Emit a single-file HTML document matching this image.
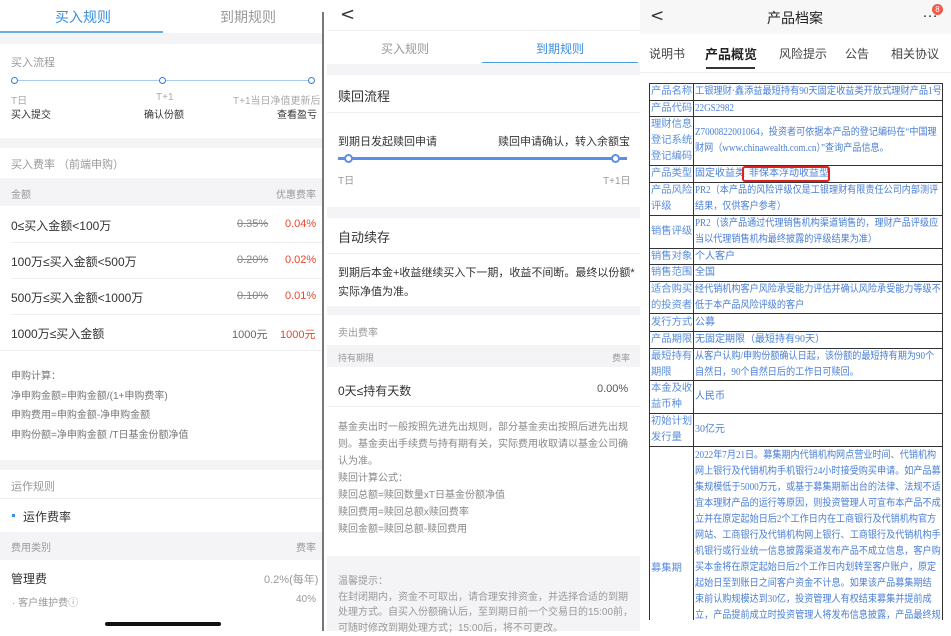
<!DOCTYPE html>
<html><head><meta charset="utf-8"><style>
*{margin:0;padding:0;box-sizing:border-box}
body{width:951px;height:631px;overflow:hidden;background:#fff;font-family:"Liberation Sans","Noto Sans CJK SC",sans-serif;position:relative;color:#333}
.a{position:absolute;white-space:nowrap}
.band{position:absolute;background:#f4f4f6}
.g{color:#999}
.blue{color:#3b8fe0}
.line{position:absolute;height:1px;background:#eee}
.tb{position:absolute;left:649px;top:83px;width:294px;border-top:1px solid #333;border-left:1px solid #333;font-family:"Liberation Serif","Noto Sans CJK SC",serif;font-size:10px;color:#4a7fd6}
.r{display:flex;border-bottom:1px solid #333;overflow:hidden}
.r>div{display:flex;align-items:center;overflow:hidden;white-space:nowrap;line-height:16px;border-right:1px solid #333;flex-shrink:0}
.r>div:first-child{width:44px;color:#5a8ede;padding-left:1px;font-size:10.3px}
.r>div:last-child{width:249px;padding-left:1px}
.r>div:last-child>span{display:block;transform:scaleX(.91);transform-origin:0 50%}
</style></head><body>
<!-- Panel 1 -->
<div class="a blue" style="left:55px;top:7px;font-size:14px">买入规则</div>
<div class="a" style="left:220px;top:7px;font-size:14px;color:#999">到期规则</div>
<div class="a" style="left:0;top:31px;width:163px;height:2px;background:#6aaee8"></div>
<div class="band" style="left:0;top:33px;width:322px;height:11px"></div>
<div class="a g" style="left:11px;top:54px;font-size:11px">买入流程</div>
<div class="a" style="left:14px;top:80px;width:297px;height:1px;background:#a8cdf0"></div>
<div class="a" style="left:11px;top:77px;width:7px;height:7px;border:1.5px solid #3a7ad8;border-radius:50%;background:#fff"></div>
<div class="a" style="left:159px;top:77px;width:7px;height:7px;border:1.5px solid #3a7ad8;border-radius:50%;background:#fff"></div>
<div class="a" style="left:308px;top:77px;width:7px;height:7px;border:1.5px solid #3a7ad8;border-radius:50%;background:#fff"></div>
<div class="a" style="left:11px;top:92px;font-size:10px;color:#aaa">T日</div>
<div class="a" style="left:156px;top:92px;font-size:10px;color:#aaa">T+1</div>
<div class="a" style="left:233px;top:92px;font-size:10px;color:#aaa">T+1当日净值更新后</div>
<div class="a" style="left:11px;top:106px;font-size:10px">买入提交</div>
<div class="a" style="left:144px;top:106px;font-size:10px">确认份额</div>
<div class="a" style="left:277px;top:106px;font-size:10px">查看盈亏</div>
<div class="band" style="left:0;top:138px;width:322px;height:10px"></div>
<div class="a g" style="left:11px;top:156px;font-size:11px">买入费率 （前端申购）</div>
<div class="band" style="left:0;top:178px;width:322px;height:28px"></div>
<div class="a g" style="left:11px;top:186px;font-size:10px">金额</div>
<div class="a g" style="left:276px;top:186px;font-size:10px">优惠费率</div>
<div class="a" style="left:11px;top:217px;font-size:12px">0≤买入金额&lt;100万</div>
<div class="a" style="left:237px;top:218px;font-size:11px;color:#888;text-decoration:line-through">0.35%</div>
<div class="a" style="left:285px;top:218px;font-size:11px;color:#e8472e">0.04%</div>
<div class="line" style="left:11px;top:242px;width:311px"></div>
<div class="a" style="left:11px;top:253px;font-size:12px">100万≤买入金额&lt;500万</div>
<div class="a" style="left:237px;top:254px;font-size:11px;color:#888;text-decoration:line-through">0.20%</div>
<div class="a" style="left:285px;top:254px;font-size:11px;color:#e8472e">0.02%</div>
<div class="line" style="left:11px;top:278px;width:311px"></div>
<div class="a" style="left:11px;top:289px;font-size:12px">500万≤买入金额&lt;1000万</div>
<div class="a" style="left:237px;top:290px;font-size:11px;color:#888;text-decoration:line-through">0.10%</div>
<div class="a" style="left:285px;top:290px;font-size:11px;color:#e8472e">0.01%</div>
<div class="line" style="left:11px;top:314px;width:311px"></div>
<div class="a" style="left:11px;top:325px;font-size:12px">1000万≤买入金额</div>
<div class="a" style="left:232px;top:326px;font-size:11px;color:#666">1000元</div>
<div class="a" style="left:280px;top:326px;font-size:11px;color:#e8472e">1000元</div>
<div class="line" style="left:0;top:350px;width:322px"></div>
<div class="a" style="left:11px;top:367px;font-size:10px;color:#777;line-height:19.7px">申购计算：<br>净申购金额=申购金额/(1+申购费率)<br>申购费用=申购金额-净申购金额<br>申购份额=净申购金额 /T日基金份额净值</div>
<div class="band" style="left:0;top:460px;width:322px;height:10px"></div>
<div class="a g" style="left:11px;top:478px;font-size:11px">运作规则</div>
<div class="line" style="left:0;top:498px;width:322px"></div>
<div class="a" style="left:12px;top:514px;width:3px;height:3px;background:#3b8fe0"></div>
<div class="a" style="left:23px;top:508px;font-size:12px">运作费率</div>
<div class="band" style="left:0;top:532px;width:322px;height:28px"></div>
<div class="a g" style="left:11px;top:539px;font-size:10px">费用类别</div>
<div class="a g" style="left:296px;top:539px;font-size:10px">费率</div>
<div class="a" style="left:11px;top:570px;font-size:12px">管理费</div>
<div class="a g" style="left:264px;top:571px;font-size:11px">0.2%(每年)</div>
<div class="a g" style="left:12px;top:594px;font-size:10px">· 客户维护费ⓘ</div>
<div class="a g" style="left:296px;top:594px;font-size:10px">40%</div>
<div class="a" style="left:105px;top:622px;width:116px;height:4px;border-radius:2px;background:#111"></div>
<div class="a" style="left:322px;top:12px;width:2px;height:619px;background:#777"></div>
<!-- Panel 2 -->
<div class="a" style="left:340px;top:4px;font-size:18px;color:#333;font-family:'DejaVu Sans'">&lt;</div>
<div class="line" style="left:327px;top:30px;width:313px;background:#f0f0f0"></div>
<div class="a" style="left:381px;top:40px;font-size:12px;color:#999">买入规则</div>
<div class="a blue" style="left:536px;top:40px;font-size:12px">到期规则</div>
<div class="a" style="left:482px;top:62px;width:156px;height:1px;background:#4aa0e6"></div>
<div class="band" style="left:327px;top:64px;width:313px;height:11px"></div>
<div class="a" style="left:338px;top:86px;font-size:13px">赎回流程</div>
<div class="line" style="left:327px;top:112px;width:313px"></div>
<div class="a" style="left:338px;top:133px;font-size:11px">到期日发起赎回申请</div>
<div class="a" style="left:498px;top:133px;font-size:11px">赎回申请确认，转入余额宝</div>
<div class="a" style="left:338px;top:157px;width:289px;height:3px;background:#5b8ee8"></div>
<div class="a" style="left:344px;top:154px;width:9px;height:9px;border:2px solid #5b8ee8;border-radius:50%;background:#fff"></div>
<div class="a" style="left:611px;top:154px;width:9px;height:9px;border:2px solid #5b8ee8;border-radius:50%;background:#fff"></div>
<div class="a g" style="left:338px;top:172px;font-size:10px">T日</div>
<div class="a g" style="left:603px;top:172px;font-size:10px">T+1日</div>
<div class="band" style="left:327px;top:207px;width:313px;height:11px"></div>
<div class="a" style="left:338px;top:227px;font-size:13px">自动续存</div>
<div class="line" style="left:327px;top:253px;width:313px"></div>
<div class="a" style="left:338px;top:264px;font-size:11px;line-height:19px">到期后本金+收益继续买入下一期，收益不间断。最终以份额*<br>实际净值为准。</div>
<div class="band" style="left:327px;top:306px;width:313px;height:9px"></div>
<div class="a g" style="left:338px;top:324px;font-size:10px">卖出费率</div>
<div class="band" style="left:327px;top:345px;width:313px;height:22px"></div>
<div class="a g" style="left:338px;top:351px;font-size:9px">持有期限</div>
<div class="a g" style="left:612px;top:351px;font-size:9px">费率</div>
<div class="a" style="left:338px;top:382px;font-size:12px">0天≤持有天数</div>
<div class="a" style="left:597px;top:383px;font-size:11px;color:#555">0.00%</div>
<div class="line" style="left:327px;top:406px;width:313px"></div>
<div class="a" style="left:338px;top:419px;font-size:10px;color:#888;line-height:17px">基金卖出时一般按照先进先出规则，部分基金卖出按照后进先出规<br>则。基金卖出手续费与持有期有关，实际费用收取请以基金公司确<br>认为准。<br>赎回计算公式：<br>赎回总额=赎回数量xT日基金份额净值<br>赎回费用=赎回总额x赎回费率<br>赎回金额=赎回总额-赎回费用</div>
<div class="band" style="left:327px;top:556px;width:313px;height:75px"></div>
<div class="a" style="left:338px;top:574px;font-size:10px;color:#999;line-height:15.5px">温馨提示：<br>在封闭期内，资金不可取出，请合理安排资金，并选择合适的到期<br>处理方式。自买入份额确认后，至到期日前一个交易日的15:00前，<br>可随时修改到期处理方式；15:00后，将不可更改。</div>
<!-- Panel 3 -->
<div class="a" style="left:640px;top:0;width:311px;height:34px;background:#f7f7f7"></div>
<div class="a" style="left:650px;top:6px;font-size:17px;color:#333;font-family:'DejaVu Sans'">&lt;</div>
<div class="a" style="left:767px;top:8px;font-size:14px;color:#222">产品档案</div>
<div class="a" style="left:922px;top:4px;font-size:16px;color:#333;letter-spacing:-1px">…</div>
<div class="a" style="left:932px;top:4px;width:11px;height:11px;border-radius:50%;background:#f25a4a;color:#fff;font-size:8px;text-align:center;line-height:11px">8</div>
<div class="a" style="left:649px;top:45px;font-size:12px;color:#444">说明书</div>
<div class="a" style="left:705px;top:44px;font-size:13px;color:#222;font-weight:bold">产品概览</div>
<div class="a" style="left:779px;top:45px;font-size:12px;color:#444">风险提示</div>
<div class="a" style="left:845px;top:45px;font-size:12px;color:#444">公告</div>
<div class="a" style="left:891px;top:45px;font-size:12px;color:#444">相关协议</div>
<div class="a" style="left:706px;top:67px;width:49px;height:2px;background:#333"></div>
<div class="line" style="left:640px;top:72px;width:311px;background:#eee"></div>
<div class="tb">
<div class="r" style="height:17px"><div>产品名称</div><div><span style="transform:scaleX(.92)">工银理财·鑫添益最短持有90天固定收益类开放式理财产品1号</span></div></div>
<div class="r" style="height:16px"><div>产品代码</div><div><span>22GS2982</span></div></div>
<div class="r" style="height:49px"><div>理财信息<br>登记系统<br>登记编码</div><div><span>Z7000822001064，投资者可依据本产品的登记编码在“中国理<br>财网（www.chinawealth.com.cn）”查询产品信息。</span></div></div>
<div class="r" style="height:17px"><div>产品类型</div><div>固定收益类<span style="display:inline;transform:none;margin-left:4px">非保本浮动收益型</span></div></div>
<div class="r" style="height:33px"><div>产品风险<br>评级</div><div><span>PR2（本产品的风险评级仅是工银理财有限责任公司内部测评<br>结果，仅供客户参考）</span></div></div>
<div class="r" style="height:33px"><div>销售评级</div><div><span>PR2（该产品通过代理销售机构渠道销售的，理财产品评级应<br>当以代理销售机构最终披露的评级结果为准）</span></div></div>
<div class="r" style="height:16px"><div>销售对象</div><div>个人客户</div></div>
<div class="r" style="height:17px"><div>销售范围</div><div>全国</div></div>
<div class="r" style="height:32px"><div>适合购买<br>的投资者</div><div><span>经代销机构客户风险承受能力评估并确认风险承受能力等级不<br>低于本产品风险评级的客户</span></div></div>
<div class="r" style="height:18px"><div>发行方式</div><div>公募</div></div>
<div class="r" style="height:17px"><div>产品期限</div><div>无固定期限（最短持有90天）</div></div>
<div class="r" style="height:32px"><div>最短持有<br>期限</div><div><span>从客户认购/申购份额确认日起，该份额的最短持有期为90个<br>自然日，90个自然日后的工作日可赎回。</span></div></div>
<div class="r" style="height:33px"><div>本金及收<br>益币种</div><div>人民币</div></div>
<div class="r" style="height:33px"><div>初始计划<br>发行量</div><div>30亿元</div></div>
<div class="r" style="height:180px;border-bottom:none"><div style="align-items:flex-end;padding-bottom:50px">募集期</div><div style="align-items:flex-start;padding-top:1px"><span style="transform-origin:0 0">2022年7月21日。募集期内代销机构网点营业时间、代销机构<br>网上银行及代销机构手机银行24小时接受购买申请。如产品募<br>集规模低于5000万元，或基于募集期新出台的法律、法规不适<br>宜本理财产品的运行等原因，则投资管理人可宣布本产品不成<br>立并在原定起始日后2个工作日内在工商银行及代销机构官方<br>网站、工商银行及代销机构网上银行、工商银行及代销机构手<br>机银行或行业统一信息披露渠道发布产品不成立信息，客户购<br>买本金将在原定起始日后2个工作日内划转至客户账户，原定<br>起始日至到账日之间客户资金不计息。如果该产品募集期结<br>束前认购规模达到30亿，投资管理人有权结束募集并提前成<br>立，产品提前成立时投资管理人将发布信息披露，产品最终规</span></div></div>
</div>
<div class="a" style="left:742px;top:166px;width:88px;height:16px;border:2px solid #e0201a;border-radius:3px"></div>
<div class="a" style="left:640px;top:620px;width:311px;height:11px;background:#fff"></div>
</body></html>
